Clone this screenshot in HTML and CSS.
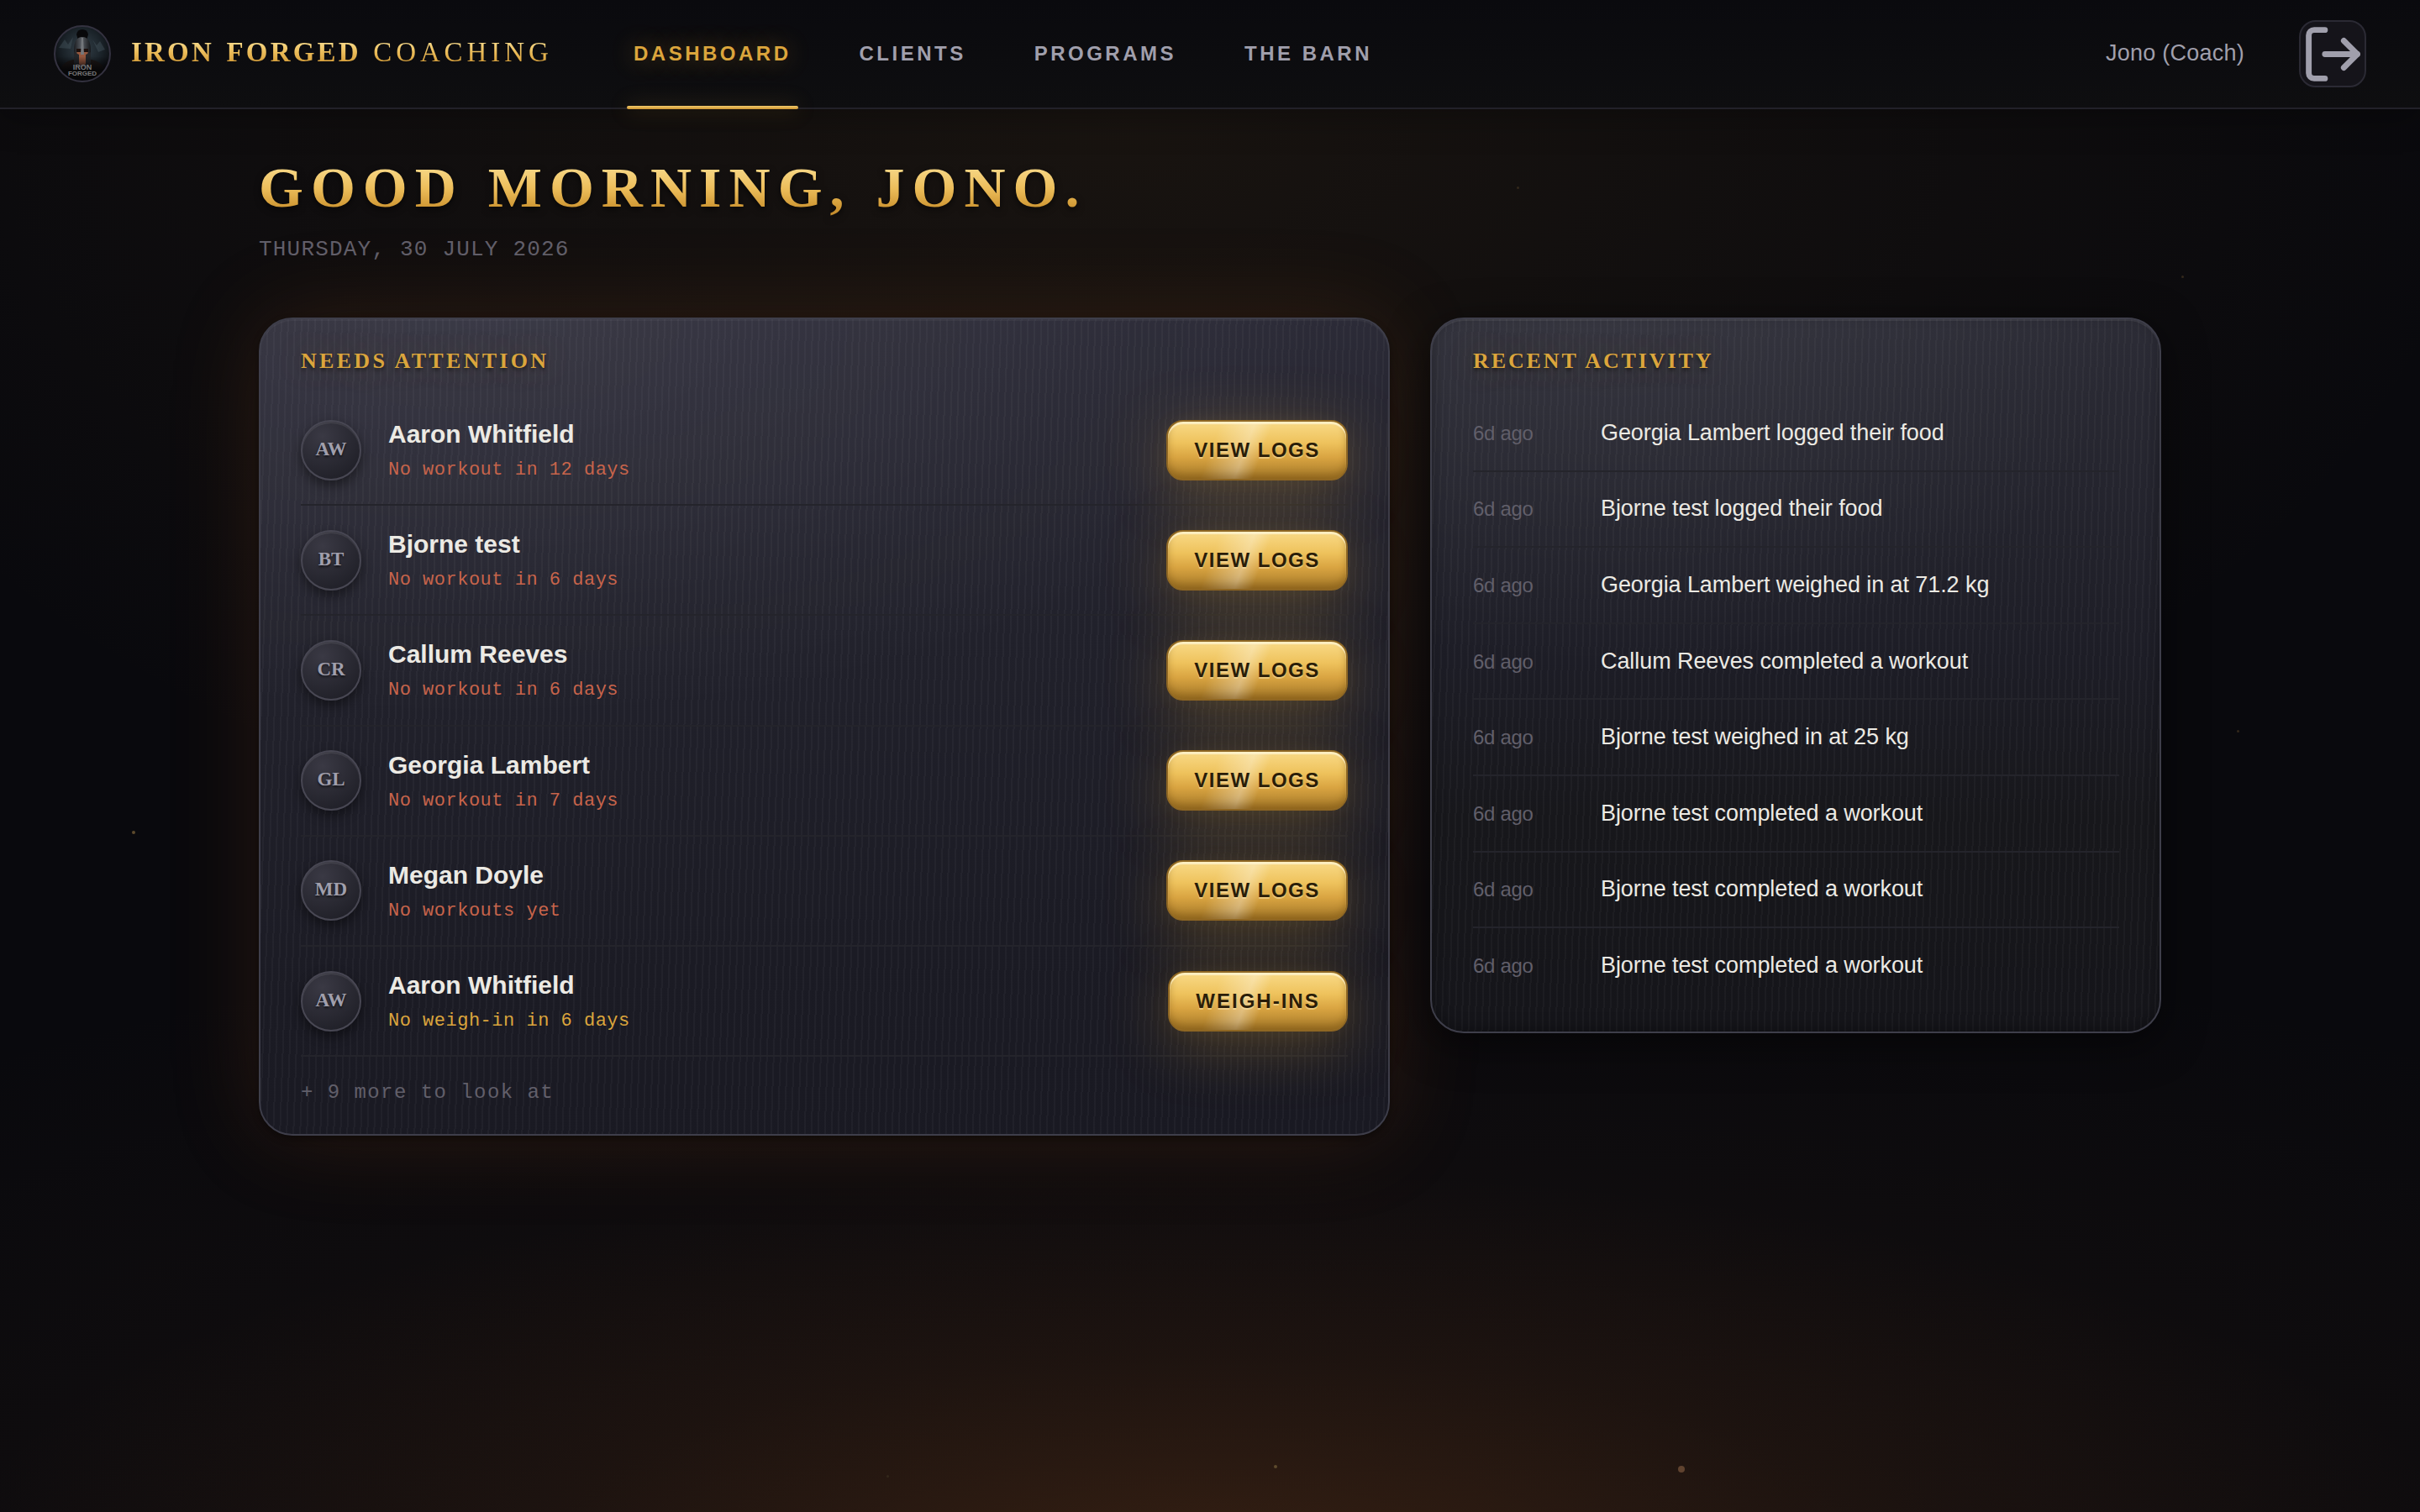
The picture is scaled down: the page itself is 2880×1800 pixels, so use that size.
FILE: index.html
```
<!DOCTYPE html>
<html lang="en">
<head>
    <meta charset="UTF-8">
    <meta name="viewport" content="width=device-width, initial-scale=1.0">
    <title>Iron Forged Coaching</title>
    <link rel="stylesheet" href="styles.css">
</head>
<body>
    <div class="embers">
        <span class="ember" style="left: 1805px; top: 222px;"></span>
        <span class="ember" style="left: 2596px; top: 328px;"></span>
        <span class="ember" style="left: 2662px; top: 869px;"></span>
        <span class="ember bright" style="left: 157px; top: 989px;"></span>
        <span class="ember" style="left: 1055px; top: 1756px;"></span>
        <span class="ember bright" style="left: 1516px; top: 1744px;"></span>
        <span class="ember large" style="left: 1997px; top: 1745px;"></span>
    </div>

    <header class="topbar">
        <div class="brand">
            <svg class="brand-logo" viewBox="0 0 68 68">
                <defs>
                    <radialGradient id="sky" cx="50%" cy="40%" r="60%">
                        <stop offset="0" stop-color="#34414a"/>
                        <stop offset="0.6" stop-color="#1a2228"/>
                        <stop offset="1" stop-color="#08090c"/>
                    </radialGradient>
                    <linearGradient id="steel" x1="0" x2="1" y1="0" y2="0">
                        <stop offset="0" stop-color="#1a1c20"/>
                        <stop offset="0.45" stop-color="#5a5e64"/>
                        <stop offset="1" stop-color="#15171a"/>
                    </linearGradient>
                    <linearGradient id="fade" x1="0" x2="0" y1="0" y2="1">
                        <stop offset="0.55" stop-color="#050507" stop-opacity="0"/>
                        <stop offset="0.8" stop-color="#050507" stop-opacity="0.9"/>
                    </linearGradient>
                </defs>
                <circle cx="34" cy="34" r="33" fill="url(#sky)"/>
                <path d="M6 27l7-10 4 6 6-9-3 14zM46 17l5 7 4-5 6 10-8 3z" fill="#506069" opacity="0.35"/>
                <path d="M8 52q4-9 15-11h22q11 2 15 11l-8 10H16z" fill="#1d1715"/>
                <path d="M27 11q1-6 7-6t7 6l-2 7H29z" fill="#08080a"/>
                <path d="M24 30q0-16 10-16t10 16v15l-6 5h-8l-6-5z" fill="url(#steel)"/>
                <path d="M27 29h14l-2 16-5 4-5-4z" fill="#95583f"/>
                <path d="M27 28h6v4h-6zM35 28h6v4h-6z" fill="#1d100d"/>
                <path d="M33 15h2l1 20h-4z" fill="#74777b"/>
                <path d="M24 32l6 3v16l-6-5zM44 32l-6 3v16l6-5z" fill="#24272b"/>
                <circle cx="34" cy="34" r="32" fill="url(#fade)"/>
                <text class="logo-text" x="34" y="53" text-anchor="middle" font-size="9">IRON</text>
                <text class="logo-text" x="34" y="60" text-anchor="middle" font-size="8">FORGED</text>
                <circle cx="34" cy="34" r="33" fill="none" stroke="#343240" stroke-width="2"/>
            </svg>
            <div class="brand-name"><b>IRON FORGED</b> <span>COACHING</span></div>
        </div>
        <nav class="nav">
            <a class="nav-link active">DASHBOARD</a>
            <a class="nav-link">CLIENTS</a>
            <a class="nav-link">PROGRAMS</a>
            <a class="nav-link">THE BARN</a>
        </nav>
        <div class="user">
            <span class="user-name">Jono (Coach)</span>
            <button class="logout" aria-label="Log out">
                <svg viewBox="0 0 24 24">
                    <path d="M9 21H5a2 2 0 0 1-2-2V5a2 2 0 0 1 2-2h4"/>
                    <path d="m16 17 5-5-5-5"/>
                    <path d="M21 12H9"/>
                </svg>
            </button>
        </div>
    </header>

    <main class="page">
        <h1 class="greeting">GOOD MORNING, JONO.</h1>
        <p class="date">THURSDAY, 30 JULY 2026</p>

        <div class="dashboard">
            <section class="card attention">
                <h2 class="card-title">NEEDS ATTENTION</h2>
                <ul class="list">
                    <li class="client-row">
                        <span class="avatar">AW</span>
                        <div class="client">
                            <p class="client-name">Aaron Whitfield</p>
                            <p class="client-note">No workout in 12 days</p>
                        </div>
                        <button class="btn">VIEW LOGS</button>
                    </li>
                    <li class="client-row">
                        <span class="avatar">BT</span>
                        <div class="client">
                            <p class="client-name">Bjorne test</p>
                            <p class="client-note">No workout in 6 days</p>
                        </div>
                        <button class="btn">VIEW LOGS</button>
                    </li>
                    <li class="client-row">
                        <span class="avatar">CR</span>
                        <div class="client">
                            <p class="client-name">Callum Reeves</p>
                            <p class="client-note">No workout in 6 days</p>
                        </div>
                        <button class="btn">VIEW LOGS</button>
                    </li>
                    <li class="client-row">
                        <span class="avatar">GL</span>
                        <div class="client">
                            <p class="client-name">Georgia Lambert</p>
                            <p class="client-note">No workout in 7 days</p>
                        </div>
                        <button class="btn">VIEW LOGS</button>
                    </li>
                    <li class="client-row">
                        <span class="avatar">MD</span>
                        <div class="client">
                            <p class="client-name">Megan Doyle</p>
                            <p class="client-note">No workouts yet</p>
                        </div>
                        <button class="btn">VIEW LOGS</button>
                    </li>
                    <li class="client-row">
                        <span class="avatar">AW</span>
                        <div class="client">
                            <p class="client-name">Aaron Whitfield</p>
                            <p class="client-note warn">No weigh-in in 6 days</p>
                        </div>
                        <button class="btn btn-weigh">WEIGH-INS</button>
                    </li>
                </ul>
                <p class="more">+ 9 more to look at</p>
            </section>

            <section class="card activity">
                <h2 class="card-title">RECENT ACTIVITY</h2>
                <ul class="list">
                    <li class="activity-row"><time>6d ago</time><span>Georgia Lambert logged their food</span></li>
                    <li class="activity-row"><time>6d ago</time><span>Bjorne test logged their food</span></li>
                    <li class="activity-row"><time>6d ago</time><span>Georgia Lambert weighed in at 71.2 kg</span></li>
                    <li class="activity-row"><time>6d ago</time><span>Callum Reeves completed a workout</span></li>
                    <li class="activity-row"><time>6d ago</time><span>Bjorne test weighed in at 25 kg</span></li>
                    <li class="activity-row"><time>6d ago</time><span>Bjorne test completed a workout</span></li>
                    <li class="activity-row"><time>6d ago</time><span>Bjorne test completed a workout</span></li>
                    <li class="activity-row"><time>6d ago</time><span>Bjorne test completed a workout</span></li>
                </ul>
            </section>
        </div>
    </main>
</body>
</html>
```
FILE: styles.css
```
:root {
    --gold: #dba53c;
    --text: #eceae4;
    --muted: #a09fac;
    --dim: #615f6a;
    --line: #24242b;
    --edge: #3e3e4a;
    --serif: "Liberation Serif", "Times New Roman", serif;
    --sans: "Liberation Sans", Arial, sans-serif;
    --mono: "Liberation Mono", "Courier New", monospace;
}

* {
    margin: 0;
    padding: 0;
    box-sizing: border-box;
}

body {
    min-height: 100vh;
    overflow: hidden;
    background:
        radial-gradient(ellipse 1500px 480px at 50% 104%, rgba(150, 78, 28, 0.24), rgba(120, 62, 25, 0.1) 55%, transparent 100%),
        radial-gradient(ellipse 2300px 800px at 50% 104%, rgba(110, 65, 30, 0.14), transparent 100%),
        radial-gradient(ellipse 1650px 950px at 46% 8%, rgba(150, 105, 40, 0.11), transparent 100%),
        #09090d;
    font-family: var(--sans);
    color: var(--text);
}

.ember {
    position: absolute;
    width: 3px;
    height: 3px;
    border-radius: 50%;
    background: #33281b;
}

.ember.bright {
    width: 4px;
    height: 4px;
    background: #5d4a2c;
}

.ember.large {
    width: 8px;
    height: 8px;
    background: #60432f;
}

/* top bar */

.topbar {
    height: 130px;
    padding: 0 64px;
    display: flex;
    align-items: center;
    background: linear-gradient(#0a0a0e, #0e0e10);
    border-bottom: 2px solid #222129;
    box-shadow: 0 8px 40px rgba(0, 0, 0, 0.3);
}

.brand {
    display: flex;
    align-items: center;
    gap: 24px;
    width: 682px;
}

.brand-logo {
    width: 68px;
    height: 68px;
}

.logo-text {
    font-family: var(--sans);
    font-weight: bold;
    fill: #77777a;
}

.brand-name {
    font-family: var(--serif);
    font-size: 33px;
    line-height: 40px;
    letter-spacing: 3.2px;
    word-spacing: 3px;
    white-space: nowrap;
    margin-top: -4px;
    color: transparent;
    background: linear-gradient(#f6d98a 20%, #ecbd5a 50%, #d29a36 85%);
    -webkit-background-clip: text;
    background-clip: text;
}

.brand-name span {
    letter-spacing: 4.9px;
}

.nav {
    display: flex;
    gap: 65px;
    height: 100%;
}

.nav-link {
    position: relative;
    padding: 0 8px;
    font-size: 24px;
    font-weight: bold;
    line-height: 127px;
    letter-spacing: 3.5px;
    color: var(--muted);
}

.nav-link.active {
    color: var(--gold);
    text-shadow: 0 0 28px rgba(219, 165, 60, 0.45);
}

.nav-link.active::after {
    content: "";
    position: absolute;
    left: 0;
    right: 0;
    bottom: -2px;
    height: 4px;
    border-radius: 2px;
    background: linear-gradient(#f3cb6c, #cf9631);
    box-shadow: 0 0 24px rgba(219, 165, 60, 0.35);
}

.user {
    margin-left: auto;
    display: flex;
    align-items: center;
    gap: 65px;
}

.user-name {
    font-size: 27px;
    letter-spacing: 0.25px;
    line-height: 36px;
    margin-top: -3px;
    color: var(--muted);
}

.logout {
    width: 80px;
    height: 80px;
    display: flex;
    align-items: center;
    justify-content: center;
    background: #15141a;
    border: 2px solid #2b2a34;
    border-radius: 20px;
}

.logout svg {
    flex: none;
    width: 77px;
    height: 77px;
    fill: none;
    stroke: var(--muted);
    stroke-width: 2.15;
    stroke-linecap: round;
    stroke-linejoin: round;
}

/* page */

.page {
    width: 2264px;
    margin: 0 auto;
    padding-top: 53px;
}

.greeting {
    width: max-content;
    font-family: var(--serif);
    font-size: 68px;
    line-height: 80px;
    letter-spacing: 9px;
    word-spacing: 3px;
    color: transparent;
    background: linear-gradient(#f9dc8e 15%, #ecbd5a 52%, #cf9733 80%, #b98128);
    -webkit-background-clip: text;
    background-clip: text;
    filter: drop-shadow(0 3px 4px rgba(0, 0, 0, 0.6));
}

.date {
    margin-top: 14px;
    font-family: var(--mono);
    font-size: 26px;
    line-height: 40px;
    letter-spacing: 1.2px;
    color: var(--dim);
}

.dashboard {
    margin-top: 61px;
    display: grid;
    grid-template-columns: 1346px 870px;
    gap: 48px;
    align-items: start;
}

.card {
    position: relative;
    padding: 32px 48px;
    border: 2px solid var(--edge);
    border-radius: 40px;
}

.attention {
    padding-bottom: 34px;
    background:
        repeating-linear-gradient(92deg, rgba(255, 255, 255, 0.03) 0 2px, transparent 2px 8px),
        radial-gradient(ellipse 1000px 480px at 20% 0%, rgba(255, 255, 255, 0.06), transparent 100%),
        linear-gradient(175deg, #2f2e3b 0%, #21212b 42%, #1b1b24 75%, #191922 100%);
    box-shadow:
        inset 0 2px 0 rgba(255, 255, 255, 0.04),
        0 4px 8px rgba(0, 0, 0, 0.4),
        0 0 110px rgba(190, 95, 30, 0.17);
}

.activity {
    padding-left: 49px;
    background:
        repeating-linear-gradient(92deg, rgba(255, 255, 255, 0.03) 0 2px, transparent 2px 8px),
        radial-gradient(ellipse 620px 420px at 25% 0%, rgba(255, 255, 255, 0.05), transparent 100%),
        linear-gradient(#2c2c36 0%, #1d1d26 48%, #17171b 70%, #15151a 100%);
    box-shadow:
        inset 0 2px 0 rgba(255, 255, 255, 0.07),
        inset 0 -6px 16px rgba(0, 0, 0, 0.25),
        0 12px 50px rgba(0, 0, 0, 0.5);
}

.card-title {
    font-family: var(--serif);
    font-size: 26px;
    line-height: 36px;
    letter-spacing: 3.3px;
    color: var(--gold);
    text-shadow: 0 3px 4px rgba(0, 0, 0, 0.5), 0 0 40px rgba(219, 165, 60, 0.25);
}

.activity .card-title {
    letter-spacing: 2.9px;
}

.list {
    list-style: none;
    margin-top: 23px;
}

.client-row {
    height: 131.2px;
    display: flex;
    align-items: center;
    border-bottom: 2px solid var(--line);
}

.avatar {
    width: 72px;
    height: 72px;
    border: 2px solid #484753;
    border-radius: 50%;
    background: radial-gradient(circle at 35% 25%, #3a3944, #1f1f27 85%);
    box-shadow: inset 0 2px 0 rgba(255, 255, 255, 0.08), 0 6px 14px rgba(0, 0, 0, 0.45);
    font-family: var(--serif);
    font-size: 23px;
    font-weight: bold;
    line-height: 65px;
    text-align: center;
    color: var(--muted);
    text-shadow: 0 2px 3px rgba(0, 0, 0, 0.6);
}

.client {
    flex: 1;
    margin-left: 32px;
}

.client-name {
    font-size: 30px;
    font-weight: bold;
    line-height: 38px;
}

.client-note {
    margin-top: 11px;
    font-family: var(--mono);
    font-size: 22px;
    line-height: 26px;
    letter-spacing: 0.5px;
    color: #c7644b;
}

.client-note.warn {
    color: var(--gold);
}

.btn {
    width: 216px;
    height: 72px;
    border: 2px solid #8f6723;
    border-radius: 20px;
    background:
        linear-gradient(110deg, transparent 27%, rgba(255, 255, 255, 0.32) 44%, transparent 53%),
        linear-gradient(#fadc8a 0%, #eec25c 38%, #d9a441 62%, #9f7426 100%);
    background-origin: border-box;
    box-shadow:
        inset 0 3px 1px rgba(255, 247, 214, 0.75),
        inset 0 -5px 8px rgba(110, 72, 12, 0.4),
        0 14px 76px rgba(219, 165, 60, 0.3),
        0 2px 24px rgba(219, 165, 60, 0.06);
    font-family: var(--sans);
    font-size: 24px;
    font-weight: bold;
    letter-spacing: 1.5px;
    color: #2a1d08;
    text-shadow: 0 2px 0 rgba(255, 235, 180, 0.5);
}

.btn-weigh {
    width: 214px;
    letter-spacing: 2px;
}

.more {
    margin-top: 28px;
    font-family: var(--mono);
    font-size: 24px;
    line-height: 30px;
    letter-spacing: 1.45px;
    color: var(--dim);
}

.activity-row {
    height: 90.6px;
    display: flex;
    align-items: center;
    border-bottom: 2px solid var(--line);
    font-size: 27px;
    letter-spacing: -0.08px;
}

.activity-row:last-child {
    border-bottom-color: transparent;
}

.activity-row time {
    width: 152px;
    font-size: 24px;
    letter-spacing: -0.3px;
    padding-top: 1px;
    color: var(--dim);
}
```
